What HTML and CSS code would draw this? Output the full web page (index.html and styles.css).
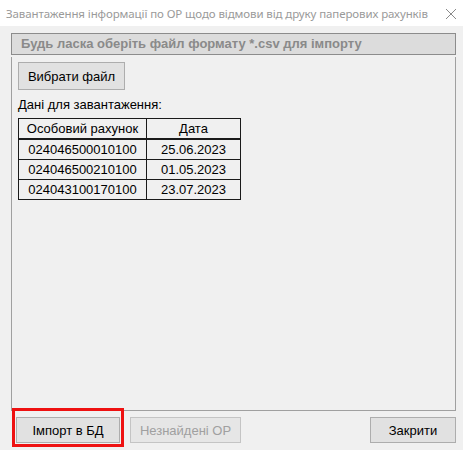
FILE: index.html
```html
<!DOCTYPE html>
<html lang="uk">

<head>
    <meta charset="UTF-8">
    <meta name="viewport" content="width=device-width, initial-scale=1.0">
    <title>Завантаження інформації</title>
    <link rel="stylesheet" href="styles.css">
</head>

<body>

    <div class="titlebar">
        <span class="title">Завантаження інформації по ОР щодо відмови від друку паперових рахунків</span>
        <svg class="close" width="12" height="12" viewBox="0 0 12 12">
            <path d="M1 1 L11 11 M11 1 L1 11" stroke="#8a8a8a" stroke-width="1" fill="none" />
        </svg>
    </div>

    <div class="window">
        <div class="hint">Будь ласка оберіть файл формату *.csv для імпорту</div>

        <div class="panel">
            <button class="btn btn-pick">Вибрати файл</button>
            <div class="label">Дані для завантаження:</div>

            <table class="grid">
                <thead>
                    <tr>
                        <th class="col-acc">Особовий рахунок</th>
                        <th class="col-date">Дата</th>
                    </tr>
                </thead>
                <tbody>
                    <tr>
                        <td>024046500010100</td>
                        <td>25.06.2023</td>
                    </tr>
                    <tr>
                        <td>024046500210100</td>
                        <td>01.05.2023</td>
                    </tr>
                    <tr>
                        <td>024043100170100</td>
                        <td>23.07.2023</td>
                    </tr>
                </tbody>
            </table>
        </div>

        <div class="footer">
            <span class="marked">
                <button class="btn btn-import">Імпорт в БД</button>
            </span>
            <button class="btn btn-missing" disabled>Незнайдені ОР</button>
            <button class="btn btn-close">Закрити</button>
        </div>
    </div>

</body>

</html>
```

FILE: styles.css
```css
body {
    margin: 0;
    width: 463px;
    height: 450px;
    overflow: hidden;
    font-family: "Liberation Sans", Arial, sans-serif;
    background-color: #f0f0f0;
}

.titlebar {
    height: 26px;
    background-color: #ffffff;
    display: flex;
    align-items: center;
    justify-content: space-between;
    padding: 0 6px 0 6px;
}

.title {
    font-family: "Noto Sans", "Open Sans", sans-serif;
    font-size: 11.5px;
    color: #9a9a9a;
    letter-spacing: -0.1px;
}

.close {
    margin-top: 1px;
}

.window {
    padding: 7px 7px 0 11px;
}

.hint {
    height: 20px;
    line-height: 20px;
    background-color: #dcdcdc;
    border: 1px solid #8c8c8c;
    padding-left: 9px;
    font-size: 13px;
    font-weight: bold;
    color: #8a8a8a;
}

.panel {
    margin-top: 2px;
    height: 348px;
    border: 1px solid #a0a0a0;
    border-top: none;
    padding: 5px 6px 0 6px;
}

.btn {
    font-family: "Liberation Sans", Arial, sans-serif;
    font-size: 13px;
    color: #000;
    background-color: #e1e1e1;
    border: 1px solid #adadad;
    padding: 0;
    height: 26px;
}

.btn-pick {
    width: 107px;
    height: 28px;
}

.label {
    font-size: 13px;
    margin-top: 5px;
    height: 19px;
    line-height: 19px;
}

.grid {
    margin-top: 4px;
    border-collapse: collapse;
    font-size: 13px;
}

.grid th,
.grid td {
    border: 1px solid #1a1a1a;
    height: 19px;
    padding: 0;
    text-align: center;
    font-weight: normal;
}

.grid thead th {
    border-bottom: 2px solid #1a1a1a;
}

.col-acc {
    width: 127px;
}

.col-date {
    width: 93px;
}

.footer {
    display: flex;
    align-items: center;
    padding: 6px 0 0 5px;
}

.marked {
    position: relative;
    display: inline-block;
}

.marked::after {
    content: "";
    position: absolute;
    top: -9px;
    bottom: -4px;
    left: -4px;
    right: -4px;
    border: 3px solid #ee1111;
}

.btn-import {
    width: 104px;
}

.btn-missing {
    width: 111px;
    margin-left: 10px;
    color: #a0a0a0;
    background-color: #e6e6e6;
    border-color: #c4c4c4;
}

.btn-close {
    width: 86px;
    margin-left: auto;
}
```
